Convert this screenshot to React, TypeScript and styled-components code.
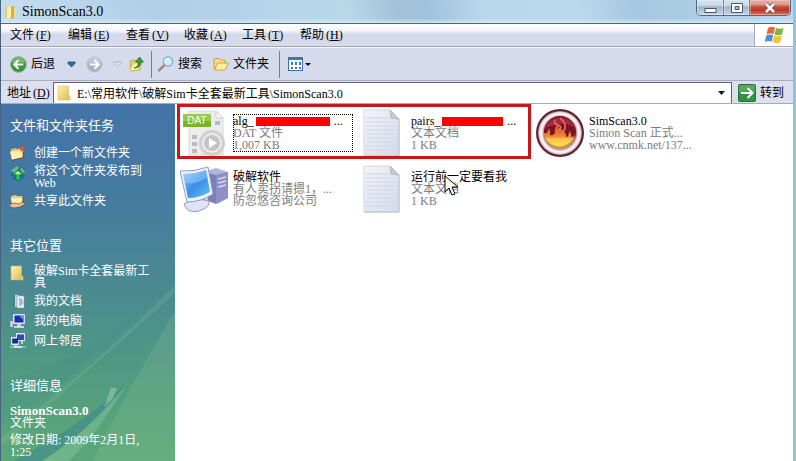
import React from "react";
import styled, { createGlobalStyle, css } from "styled-components";

const GlobalStyle = createGlobalStyle`
  * { box-sizing: border-box; }
  html, body { margin: 0; padding: 0; }
  body, button, input {
    font-family: "Liberation Serif", "Noto Sans CJK SC", serif;
    font-size: 12px;
    line-height: 12px;
    color: #000;
  }
  button { border: 0; padding: 0; background: none; }
  a { color: inherit; text-decoration: none; }
`;

const Window = styled.div`
  display: flex;
  flex-direction: column;
  min-height: 100vh;
  border-left: 1px solid #49637f;
  border-right: 3px solid #8fc6d6;
  background: #d6daed;
`;

const TitleBar = styled.header`
  display: flex;
  align-items: flex-start;
  justify-content: space-between;
  height: 24px;
  padding-right: 2px;
  border-bottom: 1px solid #4b6585;
  background:
    linear-gradient(180deg, rgba(255, 255, 255, 0) 80%, rgba(225, 240, 250, 0.7) 100%),
    linear-gradient(75deg, #c4ddee 0%, #b2cfe8 20%, #b8d5ea 38%, #b9d7e9 44%, #a4c1d8 50%, #a2c2dc 54%, #bbd7eb 61%, #bcd8ec 73%, #a7c7e0 80%, #b9d7ed 100%);
`;

const Title = styled.h1`
  display: flex;
  align-items: center;
  gap: 4px;
  height: 24px;
  margin: 0;
  padding-left: 3px;
  font-size: 14px;
  line-height: 16px;
  font-weight: 400;
`;

const Captions = styled.div`
  display: flex;
  height: 16px;
  border: 1px solid #54687f;
  border-top: 0;
  border-radius: 0 0 5px 5px;
  overflow: hidden;
`;

const CaptionButton = styled.button<{ $close?: boolean }>`
  display: flex;
  align-items: center;
  justify-content: center;
  width: ${(p) => (p.$close ? 41 : 26)}px;
  background: linear-gradient(#cfdeeb 0 35%, #9fb5cb 45%, #c2d8e8);
  box-shadow: inset 0 0 0 1px rgba(255, 255, 255, 0.35);
  & + & { border-left: 1px solid #6a8098; }
  ${(p) => p.$close && css`
    background: linear-gradient(#e0a498 0 25%, #c04a35 48%, #b93a27 70%, #dc7459);
  `}
`;

const MenuBar = styled.nav`
  display: flex;
  align-items: stretch;
  justify-content: space-between;
  height: 23px;
  border-bottom: 1px solid #a6a8ba;
  background: linear-gradient(#fff 0, #f4f5fc 30%, #e3e5f3 40%, #d4d8e9 46%, #d8dbeb);
`;

const Menus = styled.div`
  display: grid;
  grid-template-columns: repeat(6, 58px);
  padding-left: 9px;
`;

const MenuButton = styled.button`
  display: flex;
  align-items: center;
  gap: 2px;
`;

const FlagBox = styled.div`
  display: flex;
  align-items: center;
  justify-content: center;
  width: 39px;
  border-left: 1px solid #a6a8ba;
  background: #fff;
`;

const Toolbar = styled.div`
  display: flex;
  align-items: center;
  height: 34px;
  padding-left: 9px;
  border-top: 1px solid #f6f7fd;
  border-bottom: 1px solid #a9abc0;
  background: #d6daed;
`;

const ToolButton = styled.button<{ $gap?: number }>`
  display: flex;
  align-items: center;
  gap: 4px;
  margin-right: ${(p) => p.$gap ?? 0}px;
`;

const Separator = styled.span<{ $after: number }>`
  width: 1px;
  height: 27px;
  margin-right: ${(p) => p.$after}px;
  background: #777b93;
`;

const AddressBar = styled.form`
  display: flex;
  align-items: stretch;
  height: 23px;
  padding: 1px 0 0 6px;
  border-bottom: 1px solid #a3abb5;
  background: #dcdff0;
`;

const AddressLabel = styled.label`
  display: flex;
  align-items: center;
  gap: 2px;
  width: 46px;
`;

const AddressField = styled.div`
  display: flex;
  flex: 1;
  align-items: center;
  gap: 4px;
  min-width: 0;
  padding: 0 6px 0 3px;
  border: 1px solid #5d6279;
  border-width: 1px 1px 0 1px;
  background: #fff;
`;

const AddressInput = styled.input`
  flex: 1;
  min-width: 0;
  height: 18px;
  padding: 0;
  border: 0;
  outline: 0;
  background: transparent;
`;

const GoButton = styled.button`
  display: flex;
  align-items: center;
  gap: 4px;
  width: 61px;
  padding-left: 6px;
`;

const Body = styled.div`
  display: flex;
  flex: 1;
`;

const Sidebar = styled.aside`
  position: relative;
  width: 174px;
  padding: 15px 0 0 9px;
  color: #fff;
  background: linear-gradient(#4373a8 0, #457aa0 25%, #4a8794 48%, #4f9587 68%, #58a37a 90%, #5ba779);
`;

const Streaks = styled.svg`
  position: absolute;
  left: 0;
  bottom: 0;
  width: 100%;
  height: 180px;
`;

const SideSection = styled.section`
  position: relative;
  margin-bottom: 30px;
  &:last-child { margin-bottom: 0; }
`;

const SideHeading = styled.h2`
  margin: 0 0 12px;
  font-size: 13px;
  line-height: 14px;
  font-weight: 400;
`;

const SideList = styled.ul`
  display: flex;
  flex-direction: column;
  gap: 4px;
  margin: 0;
  padding: 0;
  list-style: none;
`;

const SideLink = styled.a`
  display: grid;
  grid-template-columns: 16px 120px;
  gap: 8px;
  min-height: 16px;
  align-items: center;
  & > svg { align-self: start; }
`;

const Details = styled.div`
  width: 144px;
`;

const DetailLine = styled.p<{ $strong?: boolean; $spaced?: boolean }>`
  margin: ${(p) => (p.$spaced ? 5 : 0)}px 0 0;
  ${(p) => p.$strong && css`font-weight: 700; font-size: 13px;`}
`;

const Files = styled.main`
  position: relative;
  flex: 1;
  min-width: 0;
  padding: 5px 0 0 5px;
  background: #fff;
`;

const Tiles = styled.div`
  display: grid;
  grid-template-columns: repeat(3, 178px);
  grid-auto-rows: 48px;
  row-gap: 8px;
`;

const Tile = styled.button`
  display: grid;
  grid-template-columns: 48px 120px;
  gap: 5px;
  align-items: center;
  text-align: left;
`;

const TileText = styled.span<{ $focused?: boolean }>`
  display: block;
  padding: 1px 0;
  outline: ${(p) => (p.$focused ? "1px dotted #000" : "0")};
  outline-offset: -1px;
`;

const FileName = styled.span`
  display: flex;
  height: 12px;
  align-items: center;
`;

const FileMeta = styled.span`
  display: block;
  color: #7b7b7b;
`;

const Redaction = styled.span<{ $width: number }>`
  width: ${(p) => p.$width}px;
  height: 9px;
  margin: 0 4px 0 2px;
  background: #f00;
`;

const Highlight = styled.div`
  position: absolute;
  top: 0;
  left: 2px;
  width: 354px;
  height: 55px;
  border: 3px solid #c8181c;
  pointer-events: none;
`;

const Pointer = styled.svg`
  position: absolute;
  left: 269px;
  top: 71px;
`;

const FolderIcon = ({ size = 16 }: { size?: number }) => (
  <svg width={size} height={size} viewBox="0 0 16 16" aria-hidden="true">
    <defs>
      <linearGradient id="fold" x1="0" x2="1" y2="1">
        <stop offset="0" stopColor="#fff3b4" />
        <stop offset="1" stopColor="#dfb84e" />
      </linearGradient>
    </defs>
    <path d="M1 1h10.500v9.500l1.500 1V15H1z" fill="url(#fold)" stroke="#d4b25a" strokeWidth=".5" />
    <path d="M11 10.500l2 1V15h-2z" fill="#f7e28e" stroke="#c59f42" strokeWidth=".5" />
  </svg>
);

const TitleFolder = () => (
  <svg width="14" height="16" viewBox="0 0 14 16" aria-hidden="true">
    <path d="M1 2l5-1v13l-5 1z" fill="#e7cd70" />
    <path d="M3 3l4-1v11l-4 2z" fill="#fff0ae" />
    <path d="M7 2l5 1v10l-5 2z" fill="#d4b04a" />
    <path d="M10 3l2 .5V13l-2 .7z" fill="#f2dc8b" />
  </svg>
);

const RoundArrow = ({ back }: { back?: boolean }) => (
  <svg width="17" height="17" viewBox="0 0 18 18" aria-hidden="true">
    <circle cx="9" cy="9" r="8.2" fill={back ? "#37973a" : "#adb1bf"} stroke={back ? "#76ad7c" : "#c5c8d4"} />
    <path d="M2 8a7 7 0 0 1 14 0q-7-3-14 0" fill="#fff" opacity=".3" />
    <path d={back ? "M9 4.5L4.5 9 9 13.5M5 9h9" : "M9 4.5L13.5 9 9 13.5M13 9H4"} fill="none" stroke="#fff" strokeWidth="2.2" />
  </svg>
);

const Chevron = ({ muted }: { muted?: boolean }) => (
  <svg width="9" height="7" viewBox="0 0 9 7" aria-hidden="true">
    <path d="M1 1h7v1.5L4.5 6 1 2.5z" fill={muted ? "#dfe3ee" : "#2674a5"} stroke={muted ? "#a5abbc" : "#1c4c86"} strokeWidth=".8" />
  </svg>
);

const UpFolder = () => (
  <svg width="15" height="16" viewBox="0 0 15 16" aria-hidden="true">
    <path d="M1 5l5-1 1 1 5 0-1 9-9 1z" fill="#e8cf6a" stroke="#b99a38" strokeWidth=".7" />
    <path d="M1 14l3-7 9 0-3 7-8 1z" fill="#fff0a0" stroke="#c7a642" strokeWidth=".6" />
    <path d="M5 12q5-1 4-6H6.500L10.500 1l4 5h-2.500q0 6-7 6z" fill="#36993c" stroke="#1f6b2a" strokeWidth=".7" />
  </svg>
);

const Magnifier = () => (
  <svg width="16" height="16" viewBox="0 0 16 16" aria-hidden="true">
    <path d="M1 14.500l5.500-5.500" stroke="#a77b72" strokeWidth="2.400" strokeLinecap="round" />
    <circle cx="10" cy="5.500" r="4.600" fill="#cceefb" stroke="#80a7c8" strokeWidth="1.200" />
    <path d="M7 5q1-3 4-2" stroke="#fff" strokeWidth="1.400" fill="none" />
  </svg>
);

const OpenFolder = () => (
  <svg width="16" height="15" viewBox="0 0 16 15" aria-hidden="true">
    <path d="M1 12V3l1-1.500h4L7.500 3H12v3" fill="#f6df8a" stroke="#c89f2d" />
    <path d="M1.500 13l3-7H15.500l-3.500 7z" fill="#ffee9c" stroke="#cfa534" />
  </svg>
);

const ViewsIcon = () => (
  <svg width="25" height="15" viewBox="0 0 25 15" aria-hidden="true">
    <rect x=".5" y=".5" width="14" height="13" fill="#fff" stroke="#3b6ca5" />
    <path d="M0 0h15v3H0z" fill="#3975bd" />
    <path d="M3 5h2v3H3zM7 5h2v3H7zM11 5h2v3h-2zM3 10h2v2H3zM7 10h2v2H7zM11 10h2v2h-2z" fill="#3d7d9b" />
    <path d="M17 6h6l-3 3z" fill="#111" />
  </svg>
);

const WindowsFlag = () => (
  <svg width="20" height="19" viewBox="0 0 20 19" aria-hidden="true">
    <path d="M4 2q3-2 7-.5L9.500 8Q6 7 2.500 8.500z" fill="#e9683a" />
    <path d="M12 2q4 1.500 7.500 0L18 8.500q-4 1.500-7.500 0z" fill="#7db83f" />
    <path d="M2.200 9.500q3-1.500 7-.5L7.800 15.500Q4 14.500.800 16z" fill="#4c8fd8" />
    <path d="M10.200 9.500q4 1.500 7.500 0L16 16.500q-4 1.500-7.300-.5z" fill="#f4c62f" />
  </svg>
);

const GoIcon = () => (
  <svg width="18" height="18" viewBox="0 0 18 18" aria-hidden="true">
    <rect x=".5" y=".5" width="17" height="17" rx="1" fill="#2f963c" stroke="#297135" />
    <path d="M1 1h16v7Q9 6 1 9z" fill="#77bb78" opacity=".5" />
    <path d="M3 9h11M9.500 4l5 5-5 5" fill="none" stroke="#fff" strokeWidth="2" />
  </svg>
);

const NewFolder = () => (
  <svg width="16" height="16" viewBox="0 0 16 16" aria-hidden="true">
    <path d="M1 4l5-1 1 1 6-1v10L2 15z" fill="#e5b96a" />
    <path d="M0 6.500L11 5l2 7-11 3z" fill="#ffecb2" />
    <path d="M2 15.300l11-2.500 1-6" fill="none" stroke="#70471f" />
    <path d="M12 0l1 2 2.500 0-1.500 2 1 2.500-3-1-2 1 .5-2.500-1.500-2h2.500z" fill="#c9602c" />
  </svg>
);

const WebIcon = () => (
  <svg width="16" height="16" viewBox="0 0 16 16" aria-hidden="true">
    <circle cx="8" cy="8" r="7.500" fill="#216db1" />
    <path d="M1 6q3-5 8-5l-1 4-4 3zM10 2q5 2 5 7l-4-2z" fill="#61bb75" />
    <path d="M8 5l5.500 5H10v5H6v-5H2.500z" fill="#37c34c" stroke="#0c7137" strokeWidth=".7" />
    <path d="M8 6l3 3H5z" fill="#c7f7ba" />
  </svg>
);

const ShareIcon = () => (
  <svg width="16" height="16" viewBox="0 0 16 16" aria-hidden="true">
    <path d="M1 3l5-1 1 1 6 0v7H2z" fill="#e6c57c" />
    <path d="M1 5h12l-2 6H2z" fill="#fff0b5" />
    <path d="M13 3v7" stroke="#754c23" />
    <path d="M0 11l5-1 4 1 4-2 2 2-5 3-6 1-4-1z" fill="#edc19b" stroke="#6d4628" strokeWidth=".7" />
  </svg>
);

const DocsIcon = () => (
  <svg width="16" height="16" viewBox="0 0 16 16" aria-hidden="true">
    <path d="M2 2l4 1v12l-4-2z" fill="#3d8c87" />
    <path d="M5 2h4v12H5z" fill="#b9d8d7" />
    <path d="M7 3h7v12H7z" fill="#f5faff" stroke="#8196b0" strokeWidth=".6" />
    <path d="M9 6h3M9 8h4M9 10h4M9 12h3" stroke="#507fc0" />
  </svg>
);

const ComputerIcon = () => (
  <svg width="16" height="16" viewBox="0 0 16 16" aria-hidden="true">
    <path d="M0 8h3v6H0z" fill="#c5c8d8" />
    <rect x="3" y="1" width="12" height="10" rx="1" fill="#dde2f2" />
    <path d="M4.500 2.500h9v7h-9z" fill="#1732a9" />
    <path d="M9 2.500h4.500V7z" fill="#6d96ec" />
    <path d="M7 11h4v2h3v2H4v-2h3z" fill="#cfd3e5" />
  </svg>
);

const NetworkIcon = () => (
  <svg width="16" height="16" viewBox="0 0 16 16" aria-hidden="true">
    <path d="M6 0h9v8H6zM1 4h8v8H1z" fill="#e1e6f6" />
    <path d="M7 1.500h7V7H7z" fill="#244db7" />
    <path d="M2.200 5.500h6v5h-6z" fill="#102c8d" />
    <path d="M4 12h3v2H4zM11 8h2v3h-2z" fill="#c4cade" />
    <path d="M0 14h4M12 14h4" stroke="#58d789" strokeWidth="2" />
    <path d="M4 14h8" stroke="#d8e0ee" strokeWidth="2" />
  </svg>
);

const DatIcon = () => (
  <svg width="48" height="48" viewBox="0 0 48 48" aria-hidden="true">
    <path d="M9 2h27l7 7v37H9z" fill="#ececec" stroke="#d8d8d8" />
    <path d="M36 2v7h7z" fill="#fff" stroke="#ccc" />
    <path d="M12 26h5v4h-5zM12 33h5v4h-5zM12 40h5v4h-5zM35 12h5v4h-5z" fill="#bbb" />
    <circle cx="32" cy="34" r="13" fill="#cfcfcf" />
    <circle cx="32" cy="34" r="10" fill="#ededed" />
    <circle cx="32" cy="34" r="8" fill="#c4c4c4" />
    <path d="M29 29l8 5-8 5z" fill="#fff" />
    <rect x="3" y="5" width="28" height="13" fill="#73b52c" />
    <path d="M3 5h28v7H3z" fill="#95cb4d" />
    <text x="17" y="15" textAnchor="middle" fill="#fff" fontFamily="Liberation Sans, sans-serif" fontSize="10">DAT</text>
  </svg>
);

const TextFileIcon = () => (
  <svg width="48" height="48" viewBox="0 0 48 48" aria-hidden="true">
    <defs>
      <linearGradient id="paper" x2="1" y2="1">
        <stop offset="0" stopColor="#f4f5fb" />
        <stop offset="1" stopColor="#d5dae9" />
      </linearGradient>
    </defs>
    <path d="M6 1h26l9 9v37H6z" fill="url(#paper)" stroke="#d3d7e4" />
    <path d="M8 9h22M8 13h31M8 17h31M8 21h31M8 25h31M8 29h31M8 33h31M8 37h31M8 41h31" stroke="#d0d6e6" />
    <path d="M32 1l1 8 8 1z" fill="#c9ccd8" stroke="#a5a9b8" strokeWidth=".7" />
    <path d="M41 10v37H6" fill="none" stroke="#b9bfcf" />
  </svg>
);

const FlameIcon = () => (
  <svg width="48" height="48" viewBox="0 0 48 48" aria-hidden="true">
    <defs>
      <linearGradient id="fire" x2="0" y2="1">
        <stop offset="0" stopColor="#d6453c" />
        <stop offset=".45" stopColor="#ee7a2c" />
        <stop offset="1" stopColor="#ffe65c" />
      </linearGradient>
      <radialGradient id="ring">
        <stop offset=".74" stopColor="#b88a90" />
        <stop offset=".84" stopColor="#fff8f8" />
        <stop offset=".93" stopColor="#f3e2e4" />
        <stop offset="1" stopColor="#a8717c" />
      </radialGradient>
    </defs>
    <circle cx="24" cy="24" r="24" fill="#5a2430" />
    <circle cx="24" cy="24" r="22" fill="url(#ring)" />
    <circle cx="24" cy="23" r="16" fill="#7a1422" />
    <path d="M9 19a16 16 0 0 1 30 0q-8-5-15-4t-15 4" fill="#a82b3c" />
    <path d="M8 24q3 2 5-5 2 3 1 7 4 1 5-3-1-5 3-8 0 5 5 6 4 4 3 7 3 0 3-6 3 2 2 6 3 0 4-3a16 16 0 0 1-31 1z" fill="url(#fire)" />
    <path d="M9 29h30a16 16 0 0 1-30 0" fill="#ffd84e" opacity=".6" />
    <path d="M19 11q-2 4 3 5 5 2 1 5m1-12q6 5 5 9 1 3-3 4" fill="none" stroke="#e5737a" strokeWidth="1.500" />
  </svg>
);

const PcIcon = () => (
  <svg width="48" height="48" viewBox="0 0 48 48" aria-hidden="true">
    <defs>
      <linearGradient id="screen" x2="1" y2="1">
        <stop offset="0" stopColor="#8ac9fa" />
        <stop offset=".5" stopColor="#3b8eea" />
        <stop offset="1" stopColor="#60c3f5" />
      </linearGradient>
    </defs>
    <path d="M27 6l9-3 12 4v26l-11 6-10-4z" fill="#b1b4dc" />
    <path d="M36 10l12-3v26l-12 6z" fill="#8d90c6" />
    <path d="M28 8l8 2v29l-8-3z" fill="#7c7fba" />
    <path d="M38 14l8-2M38 18l8-2M38 22l8-2" stroke="#d8daf1" strokeWidth="1.500" />
    <path d="M13 33l11-3 4 10q-12 8-20 3z" fill="#a0a8d3" />
    <path d="M4 39q12-7 25-3 2 6-10 10Q7 49 4 39z" fill="#dfe3f3" stroke="#9199c4" />
    <path d="M0 6q14 1 28-4l5 27Q21 37 7 37z" fill="#eff2fa" stroke="#8d9bc6" />
    <path d="M3 9q12 0 23-4l4 22q-11 6-22 6z" fill="url(#screen)" />
    <path d="M3 9q12 0 23-4l1 7q-10 8-22 6z" fill="#b4e2ff" opacity=".4" />
  </svg>
);

const menus = [["文件", "F"], ["编辑", "E"], ["查看", "V"], ["收藏", "A"], ["工具", "T"], ["帮助", "H"]];

const tasks = [
  { label: "创建一个新文件夹", icon: <NewFolder /> },
  { label: "将这个文件夹发布到 Web", icon: <WebIcon /> },
  { label: "共享此文件夹", icon: <ShareIcon /> },
];

const places = [
  { label: "破解Sim卡全套最新工具", icon: <FolderIcon /> },
  { label: "我的文档", icon: <DocsIcon /> },
  { label: "我的电脑", icon: <ComputerIcon /> },
  { label: "网上邻居", icon: <NetworkIcon /> },
];

const files = [
  { name: "alg_", hidden: 74, lines: ["DAT 文件", "1,007 KB"], icon: <DatIcon />, focused: true },
  { name: "pairs_", hidden: 61, lines: ["文本文档", "1 KB"], icon: <TextFileIcon /> },
  { name: "SimScan3.0", lines: ["Simon Scan 正式...", "www.cnmk.net/137..."], icon: <FlameIcon /> },
  { name: "破解软件", lines: ["有人卖拐请摁1，...", "防忽悠咨询公司"], icon: <PcIcon /> },
  { name: "运行前一定要看我", lines: ["文本文档", "1 KB"], icon: <TextFileIcon /> },
];

function LinkSection({ title, items }: { title: string; items: { label: string; icon: React.ReactNode }[] }) {
  return (
    <SideSection>
      <SideHeading>{title}</SideHeading>
      <SideList>
        {items.map((item) => (
          <li key={item.label}>
            <SideLink href="#">{item.icon}<span>{item.label}</span></SideLink>
          </li>
        ))}
      </SideList>
    </SideSection>
  );
}

export default function App() {
  return (
    <Window>
      <GlobalStyle />
      <TitleBar>
        <Title><TitleFolder />SimonScan3.0</Title>
        <Captions>
          <CaptionButton aria-label="最小化">
            <svg width="13" height="12" viewBox="0 0 13 12"><rect x="1" y="6.500" width="11" height="4" fill="#fff" stroke="#4c5668" /></svg>
          </CaptionButton>
          <CaptionButton aria-label="还原">
            <svg width="12" height="12" viewBox="0 0 12 12"><path d="M.5 1.500h11v9H.5zM4 4.500v3h4v-3z" fill="#fff" fillRule="evenodd" stroke="#4c5668" /></svg>
          </CaptionButton>
          <CaptionButton $close aria-label="关闭">
            <svg width="12" height="12" viewBox="0 0 12 12">
              <path d="M2 2l8 8M10 2l-8 8" stroke="#6a4248" strokeWidth="4" />
              <path d="M2 2l8 8M10 2l-8 8" stroke="#fff" strokeWidth="2.500" />
            </svg>
          </CaptionButton>
        </Captions>
      </TitleBar>
      <MenuBar>
        <Menus>
          {menus.map(([label, key]) => (
            <MenuButton key={key}><span>{label}</span><span>(<u>{key}</u>)</span></MenuButton>
          ))}
        </Menus>
        <FlagBox><WindowsFlag /></FlagBox>
      </MenuBar>
      <Toolbar>
        <ToolButton $gap={12}><RoundArrow back />后退</ToolButton>
        <ToolButton $gap={10} aria-label="后退历史"><Chevron /></ToolButton>
        <ToolButton $gap={10} aria-label="前进"><RoundArrow /></ToolButton>
        <ToolButton $gap={7} aria-label="前进历史"><Chevron muted /></ToolButton>
        <ToolButton $gap={7} aria-label="向上"><UpFolder /></ToolButton>
        <Separator $after={6} />
        <ToolButton $gap={11}><Magnifier />搜索</ToolButton>
        <ToolButton $gap={10}><OpenFolder />文件夹</ToolButton>
        <Separator $after={8} />
        <ToolButton aria-label="查看方式"><ViewsIcon /></ToolButton>
      </Toolbar>
      <AddressBar onSubmit={(e) => e.preventDefault()}>
        <AddressLabel htmlFor="address"><span>地址</span><span>(<u>D</u>)</span></AddressLabel>
        <AddressField>
          <FolderIcon />
          <AddressInput id="address" defaultValue="E:\常用软件\破解Sim卡全套最新工具\SimonScan3.0" />
          <ToolButton type="button" aria-label="地址列表">
            <svg width="7" height="4" viewBox="0 0 7 4"><path d="M0 0h7L3.500 4z" fill="#10173d" /></svg>
          </ToolButton>
        </AddressField>
        <GoButton type="submit"><GoIcon />转到</GoButton>
      </AddressBar>
      <Body>
        <Sidebar>
          <Streaks viewBox="0 0 174 180" preserveAspectRatio="none" aria-hidden="true">
            <path d="M174 0L60 104 0 145V100Q100 75 174 0z" fill="#3b7f91" opacity=".14" />
            <path d="M174 12Q110 70 0 165v-8Q100 80 174 4z" fill="#a7dac0" opacity=".14" />
            <path d="M174 30Q120 120 92 180h82z" fill="#a3d69a" opacity=".16" />
            <path d="M127 101Q90 150 40 180H12Q80 145 127 101z" fill="#2d7d9b" opacity=".4" />
            <path d="M127 101Q95 155 68 180H42Q90 148 127 101z" fill="#a3d8b3" opacity=".3" />
            <path d="M110 107l6 0-4 11-9 8z" fill="#b1dcae" opacity=".45" />
          </Streaks>
          <LinkSection title="文件和文件夹任务" items={tasks} />
          <LinkSection title="其它位置" items={places} />
          <SideSection>
            <SideHeading>详细信息</SideHeading>
            <Details>
              <DetailLine $strong>SimonScan3.0</DetailLine>
              <DetailLine>文件夹</DetailLine>
              <DetailLine $spaced>修改日期: 2009年2月1日, 1:25</DetailLine>
            </Details>
          </SideSection>
        </Sidebar>
        <Files>
          <Tiles>
            {files.map((file) => (
              <Tile key={file.name}>
                {file.icon}
                <TileText $focused={file.focused}>
                  <FileName>
                    {file.name}
                    {file.hidden && <><Redaction $width={file.hidden} />...</>}
                  </FileName>
                  {file.lines.map((line) => <FileMeta key={line}>{line}</FileMeta>)}
                </TileText>
              </Tile>
            ))}
          </Tiles>
          <Highlight />
          <Pointer width="15" height="22" viewBox="0 0 15 22" aria-hidden="true">
            <path d="M1 1v16l4-4 3 7 3-1-3-7h6z" fill="#fff" stroke="#000" />
          </Pointer>
        </Files>
      </Body>
    </Window>
  );
}
